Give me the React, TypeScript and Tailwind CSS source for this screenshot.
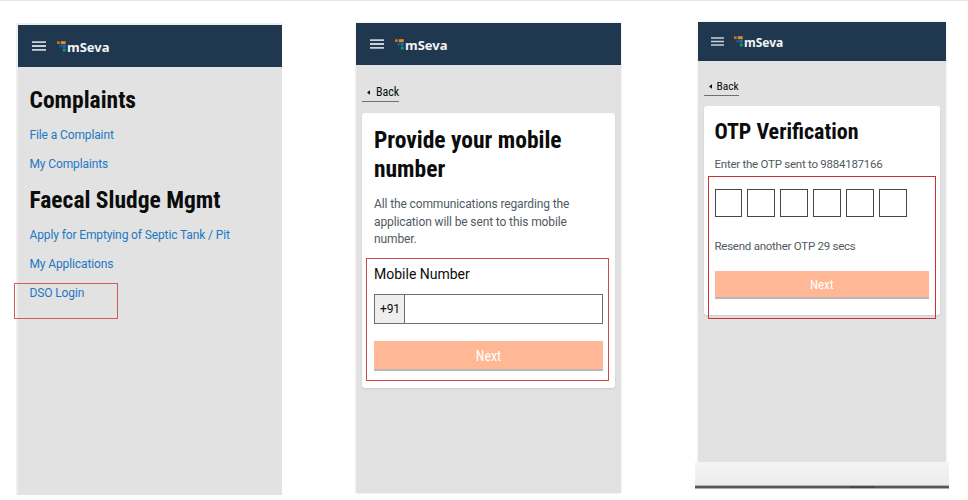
import type { ReactNode } from "react";

function Logo() {
  return (
    <svg viewBox="0 0 9 11" className="h-[11px] w-[9px] shrink-0">
      <rect x="0" y="0.3" width="2.7" height="2.7" fill="#c9741c" />
      <rect x="3.8" y="0.2" width="4.9" height="3" fill="#e8871e" />
      <rect x="2.4" y="4" width="2.4" height="2.4" fill="#12629c" />
      <rect x="5.6" y="3.9" width="3" height="2.9" fill="#1470b8" />
      <rect x="5.8" y="7.6" width="2.9" height="2.9" fill="#159a5b" />
    </svg>
  );
}

function Header({ small = false }: { small?: boolean }) {
  return (
    <header
      className={
        small
          ? "flex h-[39px] items-center bg-[#1f3850] pl-[13px]"
          : "flex h-[42px] items-center bg-[#1f3850] pl-[13.5px]"
      }
    >
      <svg
        viewBox="0 0 14 10"
        preserveAspectRatio="none"
        className={small ? "h-[9px] w-[13px] shrink-0" : "h-[10px] w-[14px] shrink-0"}
      >
        <path d="M0 1.1H14M0 5H14M0 8.9H14" stroke="#c9d1d6" strokeWidth="1.8" />
      </svg>
      <span className={small ? "ml-[10px] flex items-center" : "ml-[11px] flex items-center"}>
        <Logo />
        <b
          className={
            small
              ? "ml-px mt-[2px] font-['Noto_Sans',sans-serif] text-[12px] leading-4 text-[#f3f5f6]"
              : "ml-[1.5px] mt-[2px] font-['Noto_Sans',sans-serif] text-[13px] leading-4 text-[#f3f5f6]"
          }
        >
          mSeva
        </b>
      </span>
    </header>
  );
}

function Title({ children }: { children: ReactNode }) {
  return (
    <h1 className="h-[30px] whitespace-nowrap font-['Roboto_Condensed',Roboto,sans-serif] text-[23.5px] font-bold leading-[30px] text-[#0b0c0c] [font-stretch:75%]">
      {children}
    </h1>
  );
}

function MenuLink({ children }: { children: ReactNode }) {
  return (
    <a className="block h-[29.3px] whitespace-nowrap text-[12px] leading-[29.3px] tracking-[-0.12px] text-[#1d78c4]">
      {children}
    </a>
  );
}

function Back({ small = false }: { small?: boolean }) {
  return (
    <div
      className={
        small
          ? "flex h-[18px] w-[35px] items-center border-b border-[#6a7174] pl-[5px]"
          : "flex h-[18px] w-[37px] items-center border-b border-[#6a7174] pl-[5px]"
      }
    >
      <svg viewBox="0 0 4 6" className="h-[5px] w-[3.4px] shrink-0">
        <path d="M4 0v6L0 3z" fill="#0b0c0c" />
      </svg>
      <span
        className={
          small
            ? "-mt-px ml-[4.5px] font-['Roboto_Condensed',Roboto,sans-serif] text-[11.5px] leading-4 text-[#0b0c0c] [font-stretch:75%]"
            : "-mt-[2px] ml-[5.6px] font-['Roboto_Condensed',Roboto,sans-serif] text-[12px] leading-4 text-[#0b0c0c] [font-stretch:75%]"
        }
      >
        Back
      </span>
    </div>
  );
}

function NextButton({ small = false }: { small?: boolean }) {
  return (
    <button
      className={
        small
          ? "block h-[28px] w-full border-b-2 border-[#bdb8b6] bg-[#ffb795] font-['Roboto_Condensed',Roboto,sans-serif] text-[13px] leading-[28px] text-white"
          : "block h-[30px] w-full border-b-2 border-[#bdb8b6] bg-[#ffb795] font-['Roboto_Condensed',Roboto,sans-serif] text-[14px] leading-[30px] text-white"
      }
    >
      <span className="[font-stretch:75%]">Next</span>
    </button>
  );
}

export default function App() {
  return (
    <main className="relative flex h-[500px] w-[968px] items-start overflow-hidden border-t border-[#e6e6e6] bg-white font-[Roboto,sans-serif]">
      <section className="ml-[16px] mt-[22px] h-[472px] w-[266px] border-l-2 border-t-2 border-[#efefef] bg-[#e2e2e2]">
        <Header />
        <div className="pl-[11.5px] pt-[18px]">
          <Title>Complaints</Title>
          <nav className="mb-[6px] mt-[5.7px]">
            <MenuLink>File a Complaint</MenuLink>
            <MenuLink>My Complaints</MenuLink>
          </nav>
          <Title>Faecal Sludge Mgmt</Title>
          <nav className="mt-[5.5px]">
            <MenuLink>Apply for Emptying of Septic Tank / Pit</MenuLink>
            <MenuLink>My Applications</MenuLink>
            <MenuLink>DSO Login</MenuLink>
          </nav>
        </div>
      </section>

      <section className="ml-[74px] mt-[22px] h-[470px] w-[265px] bg-[#e2e2e2] shadow-[0_0_2px_#dddddd]">
        <Header />
        <div className="px-[6px] pt-[19px]">
          <Back />
          <div className="mt-[11px] h-[275px] rounded-[3px] bg-white px-[12px] pt-[12px] shadow-[0_1px_2px_#cccccc]">
            <Title>Provide your mobile</Title>
            <div className="-mt-px">
              <Title>number</Title>
            </div>
            <p className="mt-[12px] whitespace-nowrap text-[12px] leading-[17.7px] tracking-[-0.12px] text-[#505a5f]">
              All the communications regarding the
              <br />
              application will be sent to this mobile
              <br />
              number.
            </p>
            <label className="mt-[15px] block text-[14px] leading-[20px] text-[#0b0c0c]">Mobile Number</label>
            <div className="mt-[10px] flex h-[30px] w-[229px] border border-[#6c7072]">
              <span className="flex w-[30px] items-center justify-center border-r border-[#6c7072] bg-[#eeeeee] pl-px text-[12px] tracking-[-0.12px] text-[#0b0c0c]">
                +91
              </span>
            </div>
            <div className="mt-[17px] w-[229px]">
              <NextButton />
            </div>
          </div>
        </div>
      </section>

      <section className="ml-[74px] mt-[21px] w-[254px]">
        <div className="mx-[3px] h-[440px] bg-[#e2e2e2] shadow-[0_0_2px_#dddddd]">
          <Header small />
          <div className="px-[5.5px] pt-[17px]">
            <Back small />
            <div className="mt-[10px] h-[209px] w-[236.5px] rounded-[3px] bg-white px-[11px] pt-[12px] shadow-[0_1px_2px_#cccccc]">
              <h1 className="h-[28px] whitespace-nowrap font-['Roboto_Condensed',Roboto,sans-serif] text-[22px] font-bold leading-[28px] text-[#0b0c0c] [font-stretch:75%]">
                OTP Verification
              </h1>
              <p className="mt-[10px] whitespace-nowrap text-[11.5px] leading-[16px] tracking-[-0.25px] text-[#505a5f]">
                Enter the OTP sent to 9884187166
              </p>
              <div className="mt-[17px] flex gap-[5.2px]">
                {[0, 1, 2, 3, 4, 5].map((i) => (
                  <span key={i} className="h-[28px] w-[27.8px] border border-[#444849]" />
                ))}
              </div>
              <p className="mt-[21px] whitespace-nowrap text-[11.5px] leading-[16px] tracking-[-0.25px] text-[#505a5f]">
                Resend another OTP 29 secs
              </p>
              <div className="mt-[17px] w-[214.5px]">
                <NextButton small />
              </div>
            </div>
          </div>
        </div>
        <div className="flex h-[27px] flex-col justify-end bg-linear-to-b from-[#f5f5f5] to-[#ebebeb]">
          <div className="flex h-[4px] items-end border-b border-t border-b-[#a9adba] border-t-[#b5b5b5] bg-[#565656]">
            <i className="ml-[155px] h-[2px] w-[25px] bg-[#484848]" />
          </div>
        </div>
      </section>

      <div className="absolute left-[14px] top-[282px] h-[36px] w-[104px] border border-[#d25a5a]" />
      <div className="absolute left-[366px] top-[257px] h-[123px] w-[243px] border border-[#d24848]" />
      <div className="absolute left-[708px] top-[175px] h-[143px] w-[228px] border border-[#c83232]" />
    </main>
  );
}
